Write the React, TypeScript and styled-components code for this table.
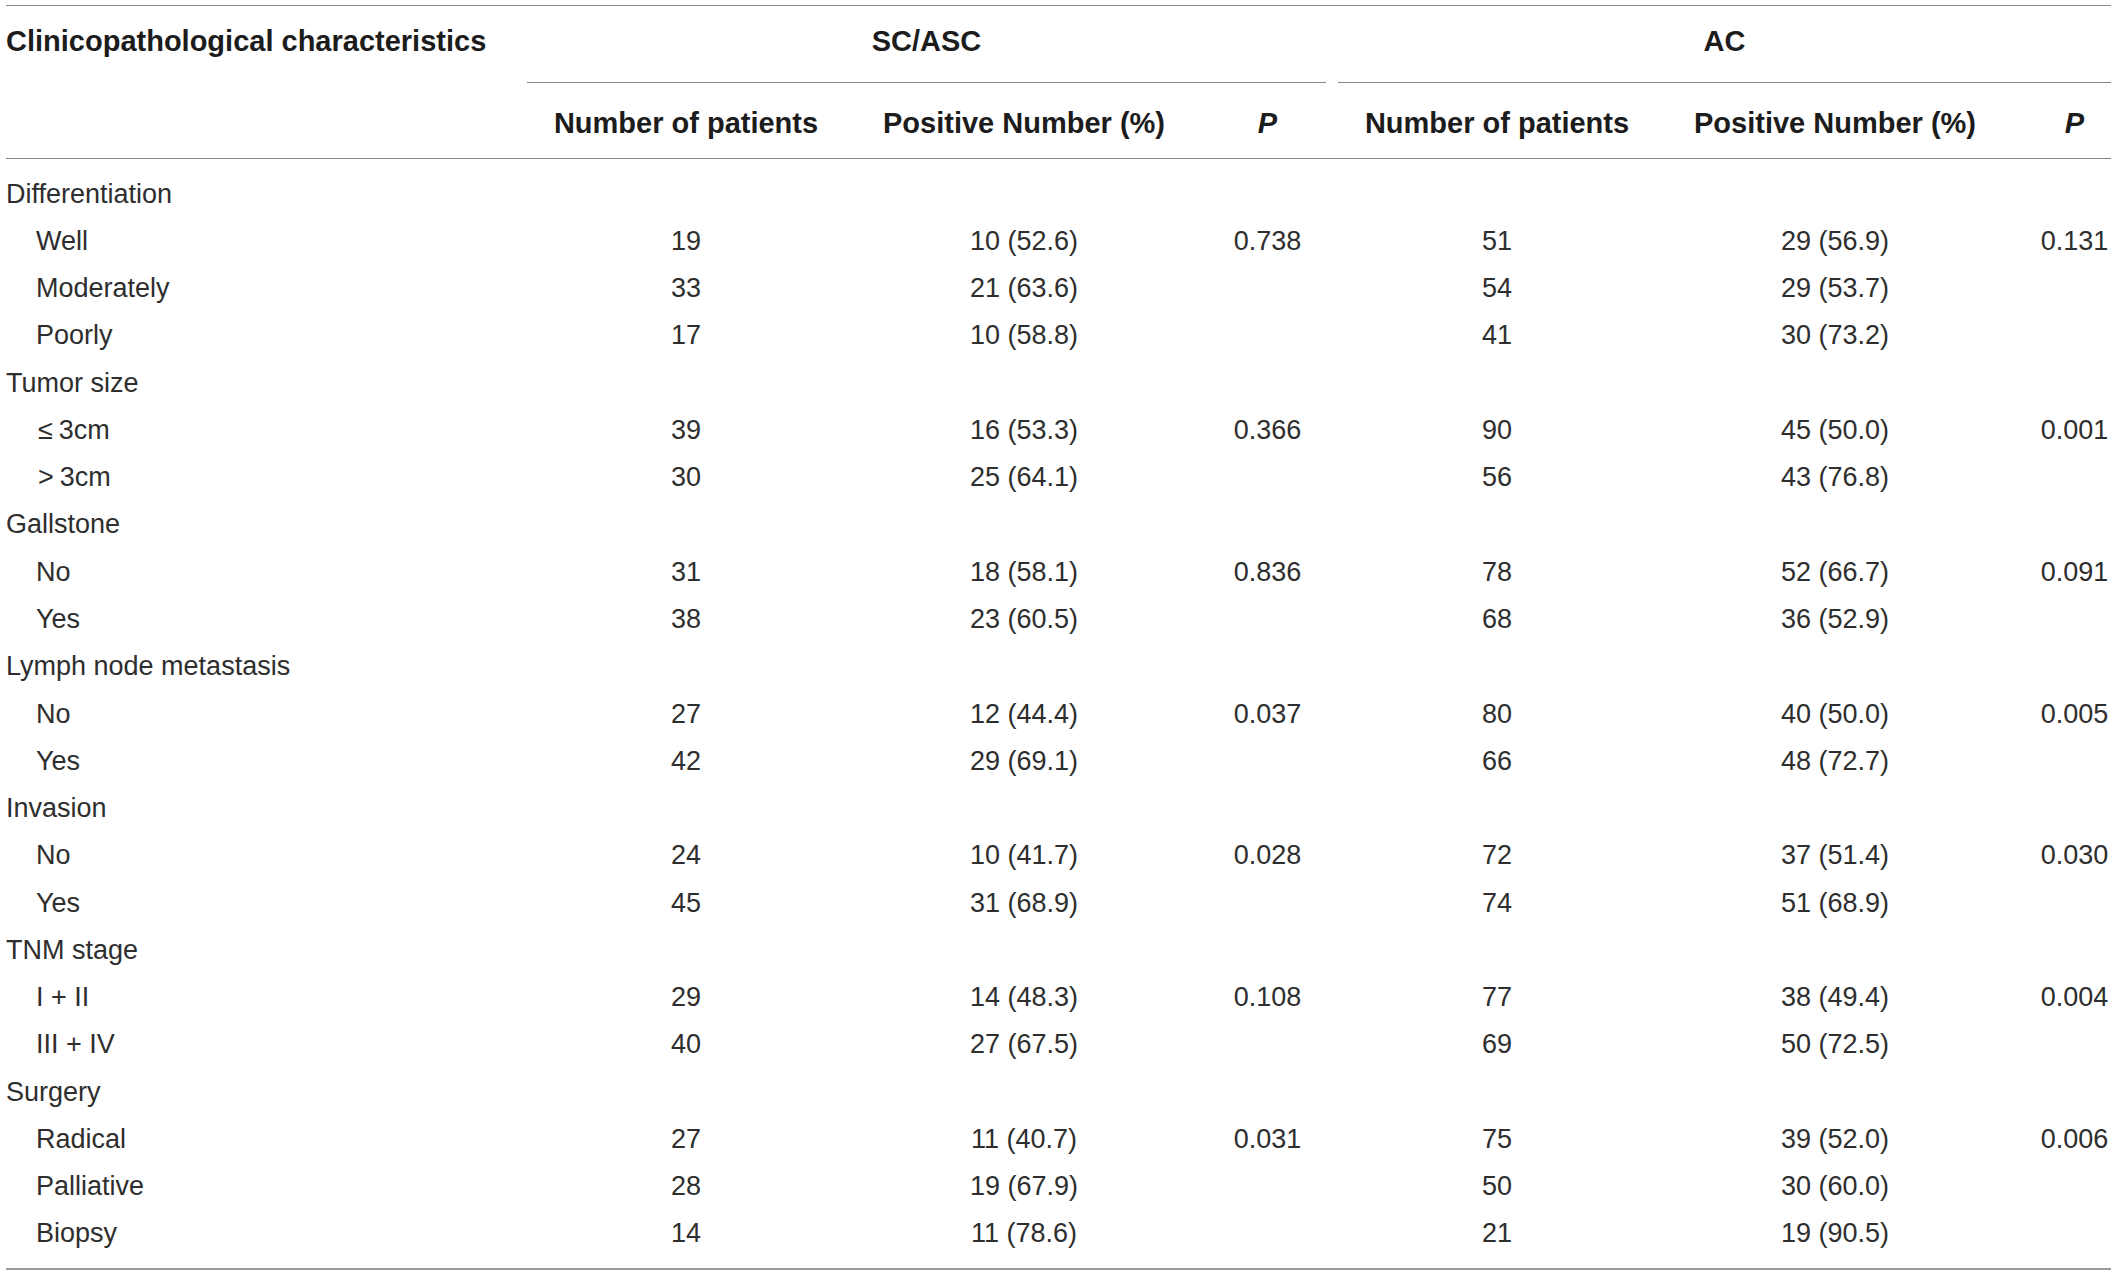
import React from "react";
import styled, { createGlobalStyle } from "styled-components";

const GlobalStyle = createGlobalStyle`
  html, body {
    margin: 0;
    padding: 0;
    background: #ffffff;
  }
  body {
    font-family: "Liberation Sans", Arial, Helvetica, sans-serif;
    color: #222222;
  }
`;

const COLUMNS = "521px 318px 358px 129px 330px 346px 103px";

const Page = styled.div`
  padding: 5px 0 0 6px;
  width: 2105px;
`;

const Table = styled.div`
  width: 2105px;
  border-top: 1px solid #8a8a8a;
  border-bottom: 2px solid #9a9a9a;
`;

const Head = styled.div`
  display: grid;
  grid-template-columns: ${COLUMNS};
  grid-template-rows: 77px 75px;
  border-bottom: 1px solid #858585;
  box-sizing: border-box;
  font-weight: 700;
  font-size: 29px;
  line-height: 33px;
  color: #1c1c1c;
`;

const CornerCell = styled.div`
  grid-column: 1;
  grid-row: 1 / span 2;
  padding-top: 19px;
  white-space: nowrap;
`;

const GroupCell = styled.div<{ $col: string; $ml: number; $mr: number }>`
  grid-row: 1;
  grid-column: ${(p) => p.$col};
  margin-left: ${(p) => p.$ml}px;
  margin-right: ${(p) => p.$mr}px;
  padding-top: 19px;
  box-sizing: border-box;
  border-bottom: 1px solid #858585;
  text-align: center;
  white-space: nowrap;
`;

const ColHead = styled.div<{ $padLeft?: number; $italic?: boolean }>`
  grid-row: 2;
  padding-top: 24px;
  padding-left: ${(p) => p.$padLeft ?? 0}px;
  text-align: center;
  white-space: nowrap;
  font-style: ${(p) => (p.$italic ? "italic" : "normal")};
`;

const Body = styled.div`
  padding: 11.5px 0 10.5px 0;
`;

const Row = styled.div`
  display: grid;
  grid-template-columns: ${COLUMNS};
  height: 47.27px;
  align-items: center;
  font-size: 27px;
  line-height: 31px;
  color: #2e2e2e;
`;

const Label = styled.div<{ $indent: boolean }>`
  padding-left: ${(p) => (p.$indent ? 30 : 0)}px;
  white-space: nowrap;
`;

const MathSign = styled.span`
  display: inline-block;
  margin: 0 6px 0 2px;
`;

const Value = styled.div<{ $padLeft?: number }>`
  padding-left: ${(p) => p.$padLeft ?? 0}px;
  text-align: center;
  white-space: nowrap;
`;

type DataRow = {
  label: React.ReactNode;
  group?: boolean;
  v?: [string, string, string, string, string, string];
};

const rows: DataRow[] = [
  { label: "Differentiation", group: true },
  { label: "Well", v: ["19", "10 (52.6)", "0.738", "51", "29 (56.9)", "0.131"] },
  { label: "Moderately", v: ["33", "21 (63.6)", "", "54", "29 (53.7)", ""] },
  { label: "Poorly", v: ["17", "10 (58.8)", "", "41", "30 (73.2)", ""] },
  { label: "Tumor size", group: true },
  {
    label: (
      <>
        <MathSign>{"\u2264"}</MathSign>3cm
      </>
    ),
    v: ["39", "16 (53.3)", "0.366", "90", "45 (50.0)", "0.001"],
  },
  {
    label: (
      <>
        <MathSign>{">"}</MathSign>3cm
      </>
    ),
    v: ["30", "25 (64.1)", "", "56", "43 (76.8)", ""],
  },
  { label: "Gallstone", group: true },
  { label: "No", v: ["31", "18 (58.1)", "0.836", "78", "52 (66.7)", "0.091"] },
  { label: "Yes", v: ["38", "23 (60.5)", "", "68", "36 (52.9)", ""] },
  { label: "Lymph node metastasis", group: true },
  { label: "No", v: ["27", "12 (44.4)", "0.037", "80", "40 (50.0)", "0.005"] },
  { label: "Yes", v: ["42", "29 (69.1)", "", "66", "48 (72.7)", ""] },
  { label: "Invasion", group: true },
  { label: "No", v: ["24", "10 (41.7)", "0.028", "72", "37 (51.4)", "0.030"] },
  { label: "Yes", v: ["45", "31 (68.9)", "", "74", "51 (68.9)", ""] },
  { label: "TNM stage", group: true },
  { label: "I + II", v: ["29", "14 (48.3)", "0.108", "77", "38 (49.4)", "0.004"] },
  { label: "III + IV", v: ["40", "27 (67.5)", "", "69", "50 (72.5)", ""] },
  { label: "Surgery", group: true },
  { label: "Radical", v: ["27", "11 (40.7)", "0.031", "75", "39 (52.0)", "0.006"] },
  { label: "Palliative", v: ["28", "19 (67.9)", "", "50", "30 (60.0)", ""] },
  { label: "Biopsy", v: ["14", "11 (78.6)", "", "21", "19 (90.5)", ""] },
];

export default function App() {
  return (
    <>
      <GlobalStyle />
      <Page>
        <Table>
          <Head>
            <CornerCell>Clinicopathological characteristics</CornerCell>
            <GroupCell $col="2 / span 3" $ml={0} $mr={6}>
              SC/ASC
            </GroupCell>
            <GroupCell $col="5 / span 3" $ml={6} $mr={0}>
              AC
            </GroupCell>
            <ColHead style={{ gridColumn: 2 }}>Number of patients</ColHead>
            <ColHead style={{ gridColumn: 3 }}>Positive Number (%)</ColHead>
            <ColHead style={{ gridColumn: 4 }} $italic>
              P
            </ColHead>
            <ColHead style={{ gridColumn: 5 }}>Number of patients</ColHead>
            <ColHead style={{ gridColumn: 6 }}>Positive Number (%)</ColHead>
            <ColHead style={{ gridColumn: 7 }} $italic $padLeft={30}>
              P
            </ColHead>
          </Head>
          <Body>
            {rows.map((r, i) => (
              <Row key={i}>
                <Label $indent={!r.group}>{r.label}</Label>
                {r.v &&
                  r.v.map((val, j) => (
                    <Value key={j} $padLeft={j === 5 ? 30 : 0}>
                      {val}
                    </Value>
                  ))}
              </Row>
            ))}
          </Body>
        </Table>
      </Page>
    </>
  );
}
